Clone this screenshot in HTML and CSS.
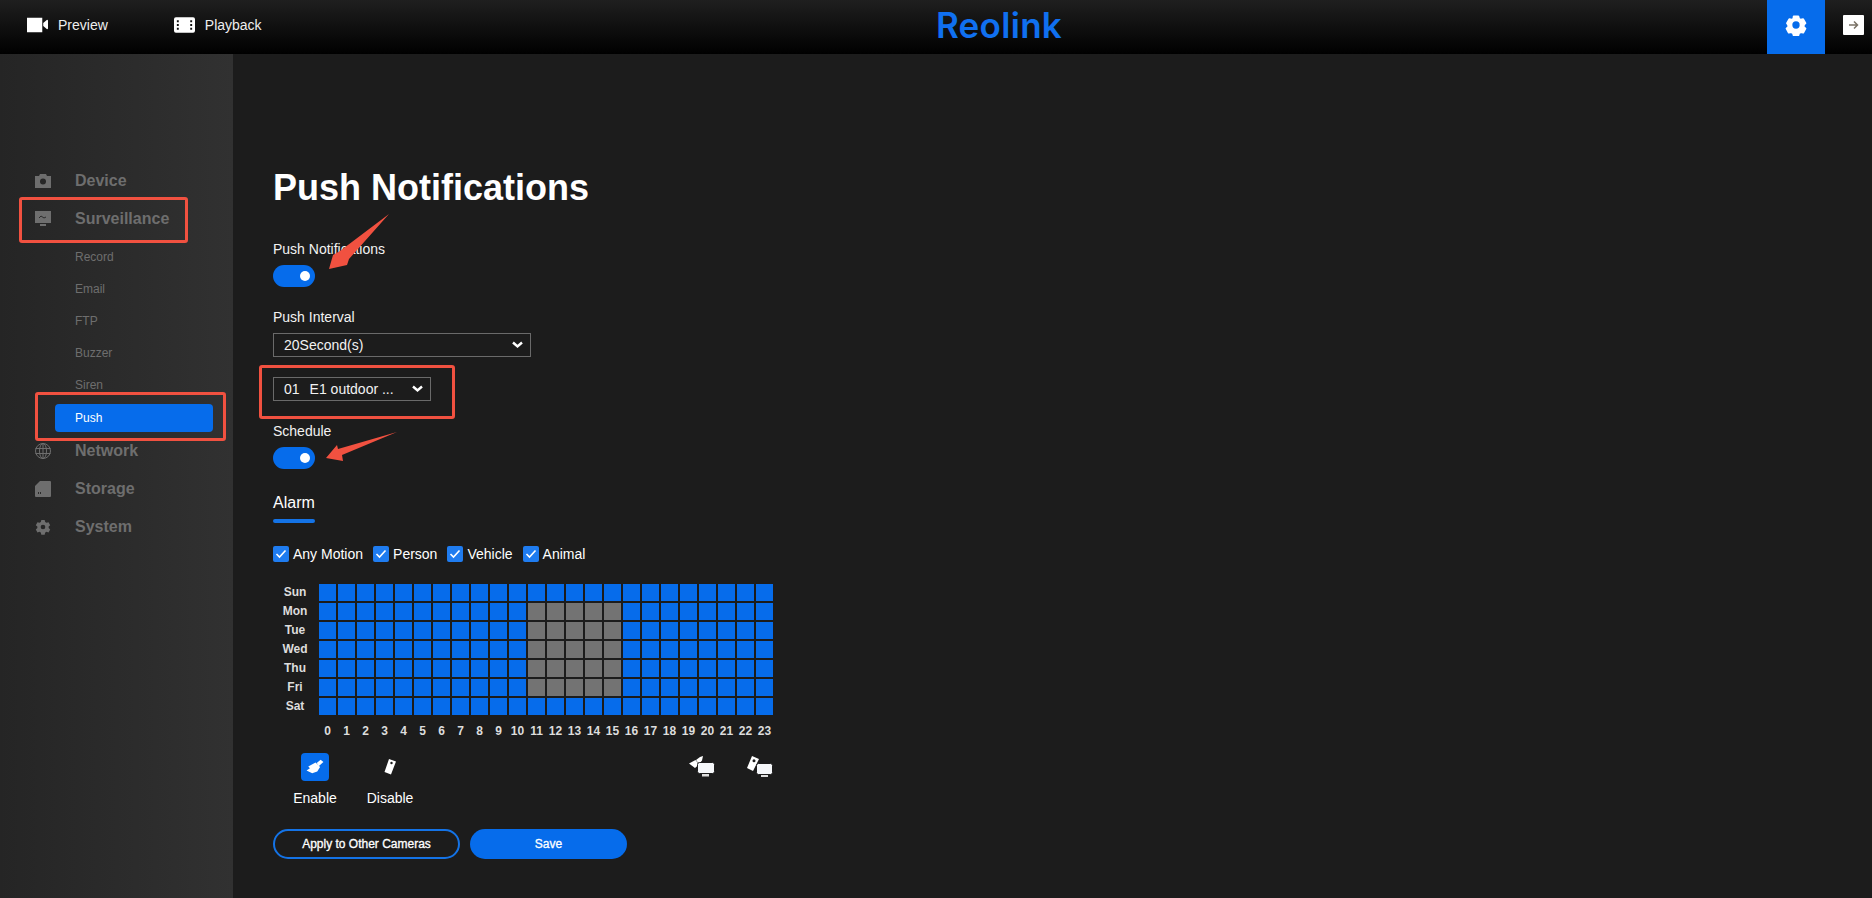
FILE: index.html
```html
<!DOCTYPE html>
<html lang="en">
<head>
  <meta charset="UTF-8" />
  <title>Reolink</title>
  <link rel="stylesheet" href="styles.css">
</head>
<body>

  <!-- Header -->
  <header class="topbar">
    <nav class="top-nav">
      <a class="top-link">
        <svg class="top-icon" viewBox="0 0 22 16"><path d="M0 0.500h16v15H0z M17 6l4-3.500q1 0 1 1v8q0 1-1 1l-4-3.500z" fill="#fff"/></svg>
        Preview
      </a>
      <a class="top-link">
        <svg class="top-icon" viewBox="0 0 22 16"><path fill-rule="evenodd" fill="#fff" d="M2 0h18a2 2 0 0 1 2 2v12a2 2 0 0 1-2 2H2a2 2 0 0 1-2-2V2a2 2 0 0 1 2-2z M3 3v2h2V3z M3 7v2h2V7z M3 11v2h2v-2z M17 3v2h2V3z M17 7v2h2V7z M17 11v2h2v-2z"/></svg>
        Playback
      </a>
    </nav>
    <div class="logo">Reolink</div>
    <div class="top-actions">
      <button class="settings-btn">
        <svg viewBox="0 0 24 24" width="22" height="22"><path fill="#fff" stroke="#fff" stroke-width="2" stroke-linejoin="round" fill-rule="evenodd" d="M9.500 2.500h5l.8 2.600 1.900 1.100 2.600-.6 2.500 4.400-1.800 1.900v2.200l1.800 1.900-2.500 4.400-2.600-.6-1.900 1.100-.8 2.600h-5l-.8-2.600-1.900-1.100-2.600.6-2.500-4.400 1.800-1.900v-2.200L2.200 10l2.500-4.400 2.600.6 1.900-1.100z"/><circle cx="12" cy="12" r="4" fill="#066ceb"/></svg>
      </button>
      <button class="logout-btn">
        <svg viewBox="0 0 21 20" width="21" height="20"><rect width="21" height="20" rx="1" fill="#fff"/><path d="M6 10h8M11 6.500l3.500 3.500-3.500 3.500" stroke="#7a7266" stroke-width="1.500" fill="none"/></svg>
      </button>
    </div>
  </header>

  <div class="layout">
    <!-- Sidebar -->
    <aside class="sidebar">
      <div class="menu-item">
        <svg class="menu-icon" viewBox="0 0 16 14"><path fill="#6e6e6e" fill-rule="evenodd" d="M0 2h4l1-2h6l1 2h4v12H0z M8 4.500a3 3 0 1 0 0 6 3 3 0 0 0 0-6z"/></svg>
        Device
      </div>
      <div class="menu-item">
        <svg class="menu-icon" viewBox="0 0 16 16"><path fill="#6e6e6e" d="M0 0h16v12H0z M5 13h6v2H5z"/><path d="M4 7l2-2 3 2 2-1" stroke="#2b2b2b" stroke-width="1" fill="none"/></svg>
        Surveillance
      </div>
      <a class="sub-item">Record</a>
      <a class="sub-item">Email</a>
      <a class="sub-item">FTP</a>
      <a class="sub-item">Buzzer</a>
      <a class="sub-item">Siren</a>
      <a class="sub-item active">Push</a>
      <div class="menu-item">
        <svg class="menu-icon" viewBox="0 0 16 16"><g fill="none" stroke="#6e6e6e" stroke-width="1"><circle cx="8" cy="8" r="7.500"/><ellipse cx="8" cy="8" rx="3.500" ry="7.500"/><path d="M8 0v16M0.500 5.500h15M0.500 10.500h15"/></g></svg>
        Network
      </div>
      <div class="menu-item">
        <svg class="menu-icon" viewBox="0 0 16 16"><path fill="#6e6e6e" d="M5 0h10a1 1 0 0 1 1 1v14a1 1 0 0 1-1 1H1a1 1 0 0 1-1-1V5z"/><path d="M3.500 11v2M5.500 11v2" stroke="#2b2b2b" stroke-width="1"/></svg>
        Storage
      </div>
      <div class="menu-item">
        <svg class="menu-icon" viewBox="0 0 24 24"><path fill="#6e6e6e" fill-rule="evenodd" d="M9.500 1.500h5l.8 3.100 1.900 1.100 3.100-.9 2.500 4.400-2.300 2.200v2.200l2.300 2.200-2.500 4.400-3.100-.9-1.900 1.100-.8 3.100h-5l-.8-3.100-1.900-1.100-3.100.9-2.500-4.400 2.300-2.200v-2.200L1.200 9.200l2.500-4.400 3.100.9 1.900-1.100z M12 8.500a3.500 3.500 0 1 0 0 7 3.500 3.500 0 0 0 0-7z"/></svg>
        System
      </div>
    </aside>

    <!-- Main Content -->
    <main class="content">
      <h1 class="page-title">Push Notifications</h1>

      <div class="field-label">Push Notifications</div>
      <div class="toggle"><span class="knob"></span></div>

      <div class="field-label interval-label">Push Interval</div>
      <div class="select select-wide">
        <span>20Second(s)</span>
        <svg class="chevron" viewBox="0 0 11 8"><path d="M1 1.500l4.500 4 4.500-4" stroke="#fff" stroke-width="2.400" fill="none"/></svg>
      </div>

      <div class="select select-camera">
        <span class="cam-no">01</span>
        <span>E1 outdoor ...</span>
        <svg class="chevron" viewBox="0 0 11 8"><path d="M1 1.500l4.500 4 4.500-4" stroke="#fff" stroke-width="2.400" fill="none"/></svg>
      </div>

      <div class="field-label schedule-label">Schedule</div>
      <div class="toggle"><span class="knob"></span></div>

      <div class="tab-title">Alarm</div>
      <div class="tab-line"></div>

      <div class="checks">
        <label class="check"><svg class="check-box" viewBox="0 0 16 16"><rect width="16" height="16" rx="2" fill="#1f7cf0"/><path d="M3.500 8l3 3 6-6.500" stroke="#fff" stroke-width="1.600" fill="none"/></svg>Any Motion</label>
        <label class="check"><svg class="check-box" viewBox="0 0 16 16"><rect width="16" height="16" rx="2" fill="#1f7cf0"/><path d="M3.500 8l3 3 6-6.500" stroke="#fff" stroke-width="1.600" fill="none"/></svg>Person</label>
        <label class="check"><svg class="check-box" viewBox="0 0 16 16"><rect width="16" height="16" rx="2" fill="#1f7cf0"/><path d="M3.500 8l3 3 6-6.500" stroke="#fff" stroke-width="1.600" fill="none"/></svg>Vehicle</label>
        <label class="check"><svg class="check-box" viewBox="0 0 16 16"><rect width="16" height="16" rx="2" fill="#1f7cf0"/><path d="M3.500 8l3 3 6-6.500" stroke="#fff" stroke-width="1.600" fill="none"/></svg>Animal</label>
      </div>

      <div class="schedule" id="schedule"></div>

      <div class="tools">
        <div class="tool">
          <span class="tool-icon on">
            <svg viewBox="0 0 16 16" width="18" height="18"><path fill="#fff" d="M15.500 3.500L13 1.500 9.500 4.500 11.500 7z M8.500 4L12.500 8l-2.500 4-4.500 1.500-5-2.500 3-2-1.500-1.500z"/></svg>
          </span>
          <span>Enable</span>
        </div>
        <div class="tool">
          <span class="tool-icon">
            <svg viewBox="0 0 14 16" width="14" height="16"><path fill="#fff" fill-rule="evenodd" d="M6 0l7 2.500-5 13L1.500 13z M8.500 2.800a1.200 1.200 0 1 0 0 2.400 1.200 1.200 0 0 0 0-2.400z"/></svg>
          </span>
          <span>Disable</span>
        </div>
        <div class="tool-right">
          <svg viewBox="0 0 26 21" width="26" height="21"><path fill="#fff" d="M14 0l-3 1-4 3 3 4 3-3.500z M6.500 4L0 7.500 6 12l4-3.500z"/><rect x="8.500" y="6.500" width="17" height="11" rx="2" fill="#f5f7fa" stroke="#1c1c1c"/><rect x="13" y="18" width="7" height="2.500" fill="#ddd"/></svg>
          <svg viewBox="0 0 26 21" width="26" height="21"><path fill="#fff" fill-rule="evenodd" d="M5 0l7 3-6 12-6-3z M7 3.200a1.500 1.500 0 1 0 0 3 1.500 1.500 0 0 0 0-3z"/><rect x="9.500" y="7.500" width="16" height="11" rx="2" fill="#f5f7fa" stroke="#1c1c1c"/><rect x="14" y="19" width="7" height="2" fill="#ddd"/></svg>
        </div>
      </div>

      <div class="actions">
        <button class="btn btn-outline">Apply to Other Cameras</button>
        <button class="btn btn-primary">Save</button>
      </div>
    </main>
  </div>

  <!-- Red annotations on top of the screenshot -->
  <div class="mark mark-surveillance"></div>
  <div class="mark mark-push"></div>
  <div class="mark mark-camera"></div>
  <svg class="arrows" viewBox="0 0 1872 898">
    <path fill="#f15140" d="M389 214 L349 259 L347 265 L329 269 L333 255 L340 251 Z"/>
    <path fill="#f15140" d="M397 432 L342 455 L343 461 L326 458 L337 445 L338 449 Z"/>
  </svg>

  <script src="schedule.js"></script>
</body>
</html>
```

FILE: styles.css
```css
:root {
  --blue: #066ceb;
  --muted: #6e6e6e;
  --red: #f15140;
}

* {
  box-sizing: border-box;
}

body {
  margin: 0;
  height: 898px;
  overflow: hidden;
  background: #1c1c1c;
  color: #fff;
  font-family: "Liberation Sans", Arial, sans-serif;
  font-size: 14px;
}

/* header */
.topbar {
  height: 54px;
  display: grid;
  grid-template-columns: 1fr auto 1fr;
  align-items: center;
  background: linear-gradient(180deg, #1f1f1f, #000);
}

.top-nav {
  display: flex;
  padding-left: 27px;
  padding-bottom: 4px;
  gap: 66px;
}

.top-link {
  display: flex;
  align-items: center;
  gap: 10px;
  font-size: 14px;
  color: #eee;
}

.top-icon {
  width: 21px;
  height: 16px;
}

.logo {
  margin-left: 126px;
  padding-bottom: 4px;
  font-family: Inter, sans-serif;
  font-weight: 600;
  font-size: 35px;
  letter-spacing: 0.3px;
  color: #1070f0;
  line-height: 48px;
}

.top-actions {
  display: flex;
  justify-content: flex-end;
  height: 54px;
}

.settings-btn {
  width: 58px;
  border: none;
  padding: 0 0 4px;
  margin-right: 18px;
  background: var(--blue);
  display: flex;
  align-items: center;
  justify-content: center;
}

.logout-btn {
  border: none;
  padding: 0 0 4px;
  margin-right: 8px;
  background: none;
  display: flex;
  align-items: center;
}

.layout {
  display: flex;
  height: 844px;
}

/* sidebar */
.sidebar {
  width: 233px;
  padding-top: 108px;
  padding-left: 35px;
  background: linear-gradient(90deg, #252525, #313131);
  flex-shrink: 0;
}

.menu-item {
  display: flex;
  align-items: center;
  height: 38px;
  font-size: 16px;
  font-weight: bold;
  color: var(--muted);
}

.menu-icon {
  width: 16px;
  height: 16px;
  margin-right: 24px;
}

.sub-item {
  display: flex;
  align-items: center;
  height: 32px;
  margin-left: 20px;
  padding-left: 20px;
  width: 158px;
  font-size: 12px;
  color: var(--muted);
}

.sub-item:first-of-type {
  margin-top: 3px;
}

.sub-item.active {
  height: 28px;
  margin-top: 3px;
  background: var(--blue);
  border-radius: 4px;
  color: #fff;
}

/* content */
.content {
  flex: 1;
  padding: 112px 0 0 40px;
}

.page-title {
  margin: 0 0 31px;
  font-size: 36px;
  line-height: 44px;
  font-weight: bold;
}

.field-label {
  font-size: 14px;
  line-height: 16px;
  color: #f2f2f2;
  margin-bottom: 8px;
}

.toggle {
  width: 42px;
  height: 22px;
  padding-right: 5px;
  border-radius: 11px;
  background: var(--blue);
  display: flex;
  align-items: center;
  justify-content: flex-end;
}

.knob {
  width: 10px;
  height: 10px;
  border-radius: 50%;
  background: #fff;
}

.interval-label {
  margin-top: 22px;
}

.select {
  display: flex;
  align-items: center;
  height: 24px;
  padding: 0 7px 0 10px;
  border: 1px solid #6a6a6a;
  font-size: 14px;
  color: #f2f2f2;
}

.select-wide {
  width: 258px;
}

.select-camera {
  width: 158px;
  margin-top: 20px;
}

.cam-no {
  margin-right: 10px;
}

.chevron {
  width: 11px;
  height: 8px;
  margin-left: auto;
}

.schedule-label {
  margin-top: 22px;
  margin-bottom: 8px;
}

.tab-title {
  margin-top: 25px;
  font-size: 16px;
  line-height: 18px;
}

.tab-line {
  width: 42px;
  height: 4px;
  margin-top: 7px;
  border-radius: 2px;
  background: #1473e6;
}

.checks {
  display: flex;
  margin-top: 23px;
  gap: 10px;
}

.check {
  display: flex;
  align-items: center;
  gap: 4px;
  line-height: 16px;
}

.check-box {
  width: 16px;
  height: 16px;
}

/* schedule grid */
.schedule {
  display: grid;
  grid-template-columns: 44px repeat(24, 17px);
  grid-auto-rows: 17px;
  gap: 2px;
  margin-top: 22px;
}

.day-label {
  font-size: 12px;
  font-weight: bold;
  color: #ddd;
  line-height: 17px;
  text-align: center;
}

.cell {
  background: var(--blue);
}

.cell.off {
  background: #737373;
}

.hour-label {
  margin-top: 6px;
  font-size: 12px;
  font-weight: bold;
  color: #ddd;
  text-align: center;
  line-height: 17px;
}

.tools {
  display: flex;
  width: 502px;
  margin-top: 19px;
  padding-left: 19px;
  padding-right: 2px;
  gap: 29px;
}

.tool {
  display: flex;
  flex-direction: column;
  align-items: center;
  gap: 9px;
  width: 46px;
  font-size: 14px;
}

.tool-icon {
  width: 28px;
  height: 28px;
  border-radius: 4px;
  display: flex;
  align-items: center;
  justify-content: center;
}

.tool-icon.on {
  background: var(--blue);
}

.tool-right {
  margin-left: auto;
  display: flex;
  gap: 32px;
  padding-top: 3px;
  height: 28px;
}

.actions {
  display: flex;
  gap: 10px;
  margin-top: 23px;
}

.btn {
  height: 30px;
  border-radius: 15px;
  font-family: inherit;
  font-size: 12px;
  -webkit-text-stroke: 0.3px #fff;
  color: #fff;
}

.btn-outline {
  width: 187px;
  background: none;
  border: 2px solid #1473e6;
}

.btn-primary {
  width: 157px;
  background: var(--blue);
  border: none;
}

/* annotations */
.mark {
  position: absolute;
  border: 3px solid var(--red);
  border-radius: 3px;
}

.mark-surveillance {
  left: 19px;
  top: 197px;
  width: 169px;
  height: 46px;
}

.mark-push {
  left: 35px;
  top: 392px;
  width: 191px;
  height: 49px;
}

.mark-camera {
  left: 259px;
  top: 365px;
  width: 196px;
  height: 54px;
}

.arrows {
  position: absolute;
  left: 0;
  top: 0;
  width: 1872px;
  height: 898px;
  pointer-events: none;
}
```

FILE: schedule.js
```js
// Build the week grid, Mon-Fri 11-15 are switched off
const days = ["Sun", "Mon", "Tue", "Wed", "Thu", "Fri", "Sat"];
const grid = document.getElementById("schedule");

function addEl(className, text) {
  const el = document.createElement("div");
  el.className = className;
  if (text !== undefined) el.textContent = text;
  grid.appendChild(el);
}

days.forEach((day, d) => {
  addEl("day-label", day);
  for (let h = 0; h < 24; h++) {
    const off = d >= 1 && d <= 5 && h >= 11 && h <= 15;
    addEl(off ? "cell off" : "cell");
  }
});

addEl("hour-label", "");
for (let h = 0; h < 24; h++) {
  addEl("hour-label", h);
}
```
